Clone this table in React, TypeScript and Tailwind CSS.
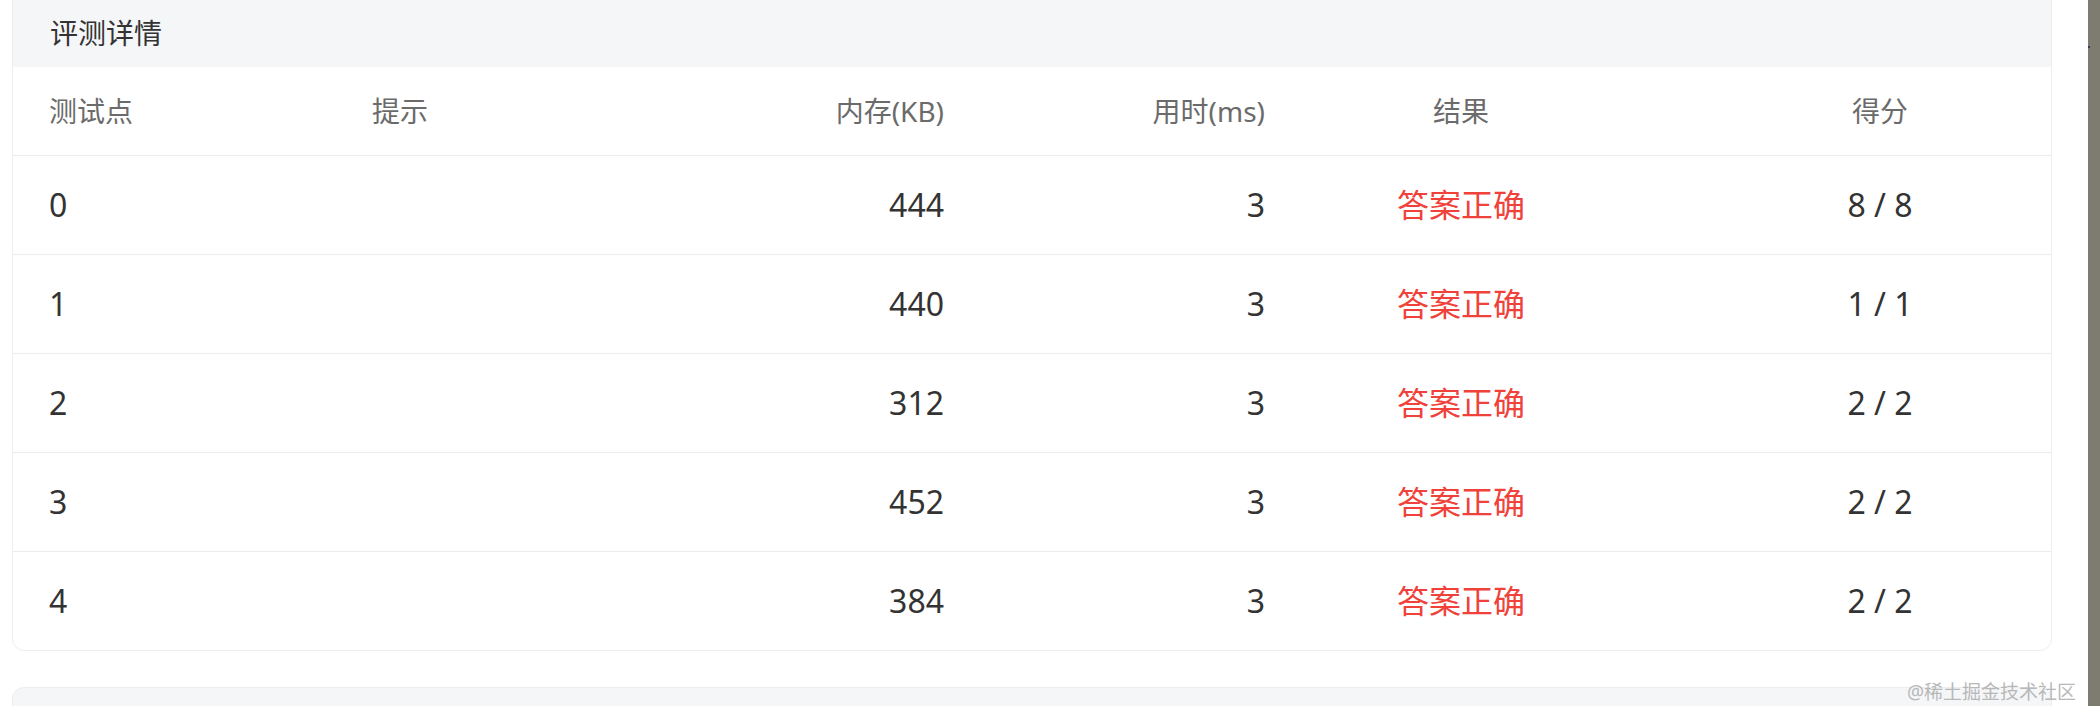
import React from "react";

const rows = [
  { id: "0", mem: "444", time: "3", score: "8 / 8" },
  { id: "1", mem: "440", time: "3", score: "1 / 1" },
  { id: "2", mem: "312", time: "3", score: "2 / 2" },
  { id: "3", mem: "452", time: "3", score: "2 / 2" },
  { id: "4", mem: "384", time: "3", score: "2 / 2" },
];

const font = { fontFamily: '"Noto Sans", "Noto Sans CJK SC", sans-serif' };

export default function App() {
  return (
    <div className="relative flex h-[706px] w-[2100px] overflow-hidden bg-white" style={font}>
      <div className="flex w-[2088px] shrink-0 flex-col">
        <div className="-mt-[10px] ml-[12px] w-[2040px] shrink-0 overflow-hidden rounded-[12px] border border-[#ebedf0] bg-white">
          <div className="flex h-[76px] items-center bg-[#f5f6f8] pl-[37px] pt-[8px] text-[28px] text-[#333333]">
            评测详情
          </div>
          <div className="flex h-[89px] items-center border-b border-[#ececec] text-[28px] text-[#6b6b6b]">
            <div className="w-[322px] pl-[36px]">测试点</div>
            <div className="w-[322px] pl-[37px]">提示</div>
            <div className="w-[323px] pr-[36px] text-right">内存(KB)</div>
            <div className="w-[321px] pr-[36px] text-right">用时(ms)</div>
            <div className="w-[320px] text-center">结果</div>
            <div className="flex-1 pl-[88px] text-center">得分</div>
          </div>
          {rows.map((r, i) => (
            <div
              key={r.id}
              className={
                i < rows.length - 1
                  ? "flex h-[99px] items-center border-b border-[#ececec] text-[32px] text-[#333333]"
                  : "flex h-[98px] items-center text-[32px] text-[#333333]"
              }
            >
              <div className="w-[322px] pl-[36px]">{r.id}</div>
              <div className="w-[322px] pl-[37px]"></div>
              <div className="w-[323px] pr-[36px] text-right">{r.mem}</div>
              <div className="w-[321px] pr-[36px] text-right">{r.time}</div>
              <div className="w-[320px] text-center text-[#f0413a]">答案正确</div>
              <div className="flex-1 pl-[88px] text-center">{r.score}</div>
            </div>
          ))}
        </div>
        <div className="ml-[12px] mt-[36px] h-[60px] w-[2040px] shrink-0 rounded-[12px] border border-[#ebedf0] bg-[#f5f6f8]"></div>
      </div>
      <div className="relative w-[12px] shrink-0 bg-[#7e7b71]">
        <div className="absolute left-0 top-[46px] h-[2px] w-[2px] bg-[#3a3a5a]"></div>
      </div>
      <div className="absolute bottom-[0px] right-[24px] text-[19px] text-[#b8b8b8]">@稀土掘金技术社区</div>
    </div>
  );
}
